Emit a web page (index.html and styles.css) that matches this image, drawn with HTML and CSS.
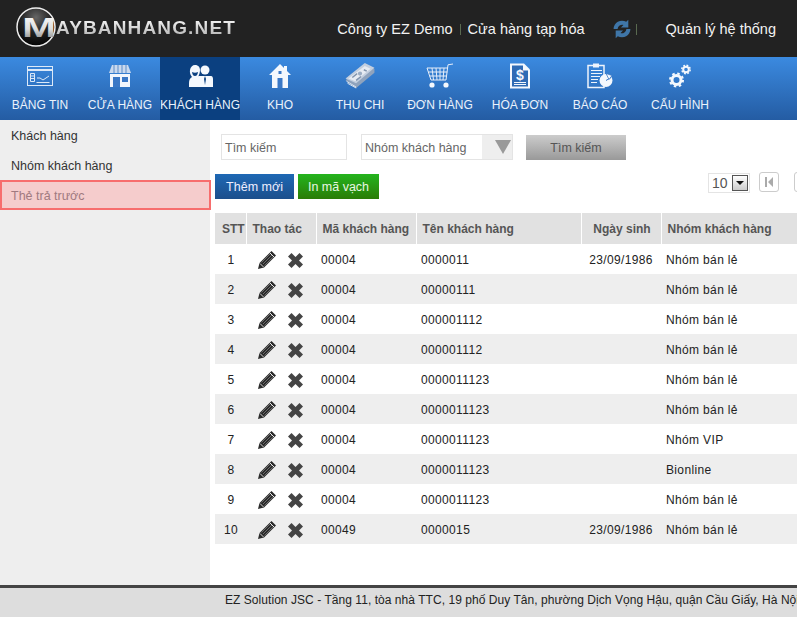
FILE: index.html
```html
<!DOCTYPE html>
<html lang="vi">
<head>
  <meta charset="UTF-8">
  <meta name="viewport" content="width=device-width, initial-scale=1.0">
  <title>Khách hàng</title>
  <link rel="stylesheet" href="styles.css">
</head>
<body>
  <header class="topbar">
    <div class="logo">
      <svg class="logo-badge" width="40" height="40" viewBox="0 0 40 40">
        <defs>
          <radialGradient id="ball" cx="50%" cy="25%" r="80%">
            <stop offset="0" stop-color="#666"/>
            <stop offset="0.5" stop-color="#222"/>
            <stop offset="1" stop-color="#000"/>
          </radialGradient>
          <linearGradient id="metal" x1="0" y1="0" x2="0" y2="1">
            <stop offset="0" stop-color="#fff"/>
            <stop offset="0.55" stop-color="#ddd"/>
            <stop offset="1" stop-color="#777"/>
          </linearGradient>
        </defs>
        <circle cx="20" cy="20" r="19" fill="url(#ball)" stroke="#eee" stroke-width="1.500"/>
        <text transform="translate(23 30) scale(1.500 1)" text-anchor="middle" class="logo-m" fill="url(#metal)">M</text>
      </svg>
      <span class="logo-text">AYBANHANG.NET</span>
    </div>
    <div class="top-links">
      <span>Công ty EZ Demo</span>
      <i class="sep"></i>
      <span>Cửa hàng tạp hóa</span>
      <svg class="sync" width="18" height="20" viewBox="1 0 16 19">
        <path d="M1 9.500a8 8 0 0 1 12-6.800L15 .8V8H8l2.400-2.400A4.500 4.500 0 0 0 4.800 9.500z" fill="#3f76a8"/>
        <path d="M17 9.500a8 8 0 0 1-12 6.800L3 18.200V11h7l-2.400 2.400A4.500 4.500 0 0 0 13.200 9.500z" fill="#3f76a8"/>
      </svg>
      <i class="sep sep-sync"></i>
      <span class="system">Quản lý hệ thống</span>
    </div>
  </header>

  <nav class="mainnav">
    <a class="nav-item">
      <svg width="28" height="22" viewBox="0 0 28 22" fill="none" stroke="#dce9f8" stroke-width="1">
        <rect x="1.500" y="1.500" width="25" height="19"/>
        <path d="M2 5h24" stroke-width="2"/>
        <path d="M4.500 8.500h4v8h-4zM4.500 11h4M4.500 13.500h4M10.500 17.500h13M11 13h3l3 2 6-4"/>
      </svg>
      <span>BẢNG TIN</span>
    </a>
    <a class="nav-item">
      <svg width="24" height="24" viewBox="0 0 24 24">
        <path d="M4 1h16l3 8H1z" fill="#c9d9ee"/>
        <path d="M6 1v8M10 1v8M14 1v8M18 1v8" stroke="#5d8dc9" stroke-width="1"/>
        <path d="M2 10h20v13H2z" fill="#f2f6fc"/>
        <path d="M5 13h7v10H5z" fill="#3a78c6"/>
        <path d="M14 13h6v5h-6z" fill="#3a78c6"/>
      </svg>
      <span>CỬA HÀNG</span>
    </a>
    <a class="nav-item active">
      <svg width="26" height="24" viewBox="0 0 26 24" fill="#f4f8fd">
        <path d="M8 1c3.500 0 5 2.500 5 5 0 3-1 5-1.500 6l2 1.500V23H2v-4c0-3 1-5 3-6-1.500-2-2.500-4-2-7 .4-3 2.500-5 5-5z"/>
        <circle cx="18" cy="6" r="4.500"/>
        <path d="M12 12h12c1.500 0 2 1.500 2 3v8H12z"/>
        <path d="M18 12l-1 3 1 6 1-6z" fill="#0b4080"/>
        <path d="M5 8c2 1 4 1 6 0-.5 3-1.500 4-3 4S5.500 11 5 8z" fill="#0b4080"/>
      </svg>
      <span>KHÁCH HÀNG</span>
    </a>
    <a class="nav-item">
      <svg width="22" height="24" viewBox="0 0 22 24">
        <path d="M11 0L0 11h3v13h16V11h3l-4-4V2h-3v2z" fill="#f4f8fd"/>
        <path d="M8.500 14h5v10h-5z" fill="#3a78c6"/>
        <path d="M9.500 7h3v3h-3z" fill="#3a78c6"/>
      </svg>
      <span>KHO</span>
    </a>
    <a class="nav-item">
      <svg width="30" height="27" viewBox="0 0 30 27">
        <path d="M0 18L20 1l10 5v4L11 26z" fill="#8fa3bd"/>
        <path d="M0 16L20 0l10 5-19 16z" fill="#c3cfdf"/>
        <path d="M3 16L20 3l6 3-16 13z" fill="#e6ebf2"/>
        <path d="M7 15l5-4M11 18l5-4M19 7l3 1.500" stroke="#8194ad" stroke-width="1.500"/>
        <circle cx="15" cy="11" r="2.200" fill="#9badc4"/>
        <path d="M1 19l10 6M2 21l9 5" stroke="#dfe6ef" stroke-width="1"/>
      </svg>
      <span>THU CHI</span>
    </a>
    <a class="nav-item">
      <svg width="28" height="26" viewBox="0 0 28 26" fill="none" stroke="#e6eefa" stroke-width="1">
        <path d="M27 1l-5 .8L20 17H5L1 5h21"/>
        <path d="M2.300 9h19M3.600 13h17M6 5l1.500 12M10 5l1 12M14 5v12M18 5l-1 12"/>
        <circle cx="6" cy="22" r="2.600" fill="#f4f8fd" stroke="none"/>
        <circle cx="20" cy="22" r="2.600" fill="#f4f8fd" stroke="none"/>
      </svg>
      <span>ĐƠN HÀNG</span>
    </a>
    <a class="nav-item">
      <svg width="22" height="25" viewBox="0 0 22 25">
        <path d="M1 0h14l6 6v19H1z" fill="#f4f8fd"/>
        <path d="M3 2h11v5h5v16H3z" fill="#2f6bb5"/>
        <text x="11" y="16" text-anchor="middle" class="bill-sign">$</text>
        <path d="M5 19h12M5 21h12" stroke="#f4f8fd" stroke-width="1"/>
      </svg>
      <span>HÓA ĐƠN</span>
    </a>
    <a class="nav-item">
      <svg width="27" height="25" viewBox="0 0 27 25">
        <path d="M1 2h16v22H1z" fill="none" stroke="#eef4fc" stroke-width="1.500"/>
        <path d="M6 0h6v4H6z" fill="#eef4fc"/>
        <path d="M4 7h11M4 10h11M4 13h9M4 16h7M4 19h6" stroke="#eef4fc" stroke-width="1"/>
        <circle cx="19" cy="17" r="6.500" fill="#f4f8fd"/>
        <path d="M19 17l5-3" stroke="#3a78c6" stroke-width="1"/>
        <path d="M19 10l6 2-3 4z" fill="#f4f8fd" stroke="#3a78c6" stroke-width=".8"/>
      </svg>
      <span>BÁO CÁO</span>
    </a>
    <a class="nav-item">
      <svg width="22" height="24" viewBox="0 0 22 24" fill="none" stroke="#f4f8fd">
        <circle cx="7.500" cy="16" r="4.500" stroke-width="3"/>
        <circle cx="7.500" cy="16" r="6.500" stroke-width="2" stroke-dasharray="2.500 2.600"/>
        <circle cx="17" cy="5.500" r="2.800" stroke-width="2"/>
        <circle cx="17" cy="5.500" r="4.200" stroke-width="1.500" stroke-dasharray="1.800 1.500"/>
      </svg>
      <span>CẤU HÌNH</span>
    </a>
  </nav>

  <div class="page">
    <aside class="sidebar">
      <a class="side-item">Khách hàng</a>
      <a class="side-item">Nhóm khách hàng</a>
      <a class="side-item current">Thẻ trả trước</a>
    </aside>

    <main class="content">
      <div class="search-row">
        <div class="field search-input">Tìm kiếm</div>
        <div class="field search-select">
          <span>Nhóm khách hàng</span>
          <b class="select-arrow"></b>
        </div>
        <button class="btn-search">Tìm kiếm</button>
      </div>

      <div class="action-row">
        <button class="btn btn-blue">Thêm mới</button>
        <button class="btn btn-green">In mã vạch</button>
        <div class="pager">
          <div class="page-size">
            <span>10</span>
            <b class="size-arrow"></b>
          </div>
          <a class="page-btn">
            <svg width="10" height="10" viewBox="0 0 10 10" fill="#aaa"><path d="M1 0h2v10H1zM9 0v10L4 5z"/></svg>
          </a>
          <a class="page-btn"></a>
        </div>
      </div>

      <table class="grid">
        <thead>
          <tr>
            <th class="c-stt">STT</th>
            <th class="c-act">Thao tác</th>
            <th class="c-code">Mã khách hàng</th>
            <th class="c-name">Tên khách hàng</th>
            <th class="c-date">Ngày sinh</th>
            <th class="c-group">Nhóm khách hàng</th>
          </tr>
        </thead>
        <tbody id="rows"></tbody>
      </table>
    </main>
  </div>

  <footer class="footer">EZ Solution JSC - Tầng 11, tòa nhà TTC, 19 phố Duy Tân, phường Dịch Vọng Hậu, quận Cầu Giấy, Hà Nội</footer>

  <script>
    const customers = [
      ["00004", "0000011", "23/09/1986", "Nhóm bán lẻ"],
      ["00004", "00000111", "", "Nhóm bán lẻ"],
      ["00004", "000001112", "", "Nhóm bán lẻ"],
      ["00004", "000001112", "", "Nhóm bán lẻ"],
      ["00004", "0000011123", "", "Nhóm bán lẻ"],
      ["00004", "0000011123", "", "Nhóm bán lẻ"],
      ["00004", "0000011123", "", "Nhóm VIP"],
      ["00004", "0000011123", "", "Bionline"],
      ["00004", "0000011123", "", "Nhóm bán lẻ"],
      ["00049", "0000015", "23/09/1986", "Nhóm bán lẻ"]
    ];

    const pencil = `<svg class="ico-edit" width="18" height="18" viewBox="0 0 18 18">
      <path d="M13.500 0l4.500 4.500L6 16.500 0 18l1.500-6z" fill="#2a2a2a"/>
      <path d="M3.500 11.500l9-9M5 13l9-9M6.500 14.500l9-9" stroke="#8a8a8a" stroke-width=".7"/>
      <path d="M11.800 1.800l4.400 4.400" stroke="#fff" stroke-width=".9"/>
      <path d="M2 12.500l3.500 3.500" stroke="#fff" stroke-width=".8"/>
    </svg>`;
    const cross = `<svg class="ico-del" width="15" height="15" viewBox="0 0 15 15">
      <path d="M3.500 0L7.500 4 11.500 0 15 3.500 11 7.500l4 4L11.500 15l-4-4-4 4L0 11.500l4-4-4-4z" fill="#444"/>
    </svg>`;

    const tbody = document.getElementById("rows");
    customers.forEach((c, i) => {
      const tr = document.createElement("tr");
      tr.innerHTML = `<td class="c-stt">${i + 1}</td>
        <td class="c-act">${pencil}${cross}</td>
        <td>${c[0]}</td><td>${c[1]}</td><td class="c-date">${c[2]}</td><td>${c[3]}</td>`;
      tbody.appendChild(tr);
    });
  </script>
</body>
</html>
```

FILE: styles.css
```css
* {
  box-sizing: border-box;
}
html, body {
  height: 100%;
}
body {
  margin: 0;
  display: flex;
  flex-direction: column;
  overflow: hidden;
  font-family: "Liberation Sans", Arial, sans-serif;
  font-size: 12px;
  color: #222;
  background: #fff;
}

/* top bar */
.topbar {
  height: 57px;
  flex: none;
  background: #222;
  display: flex;
  align-items: center;
  justify-content: space-between;
  color: #f2f2f2;
}
.logo {
  display: flex;
  align-items: center;
  margin-left: 16px;
  margin-top: -3px;
}
.logo-m {
  font-family: "Liberation Sans", Arial, sans-serif;
  font-size: 27px;
  font-weight: bold;
}
.logo-text {
  font-size: 19px;
  font-weight: bold;
  letter-spacing: 1.150px;
  margin-top: 2px;
  color: #ddd;
  background: linear-gradient(#fff, #aaa);
  -webkit-background-clip: text;
  background-clip: text;
  -webkit-text-fill-color: transparent;
}
.top-links {
  display: flex;
  align-items: center;
  font-size: 14.500px;
  margin-right: 21px;
  margin-top: 1px;
}
.sep {
  width: 1px;
  height: 11px;
  background: #5a6a50;
  margin: 0 7px;
}
.sync {
  margin-left: 28px;
}
.sep-sync {
  margin: 0 0 0 5px;
}
.system {
  margin-left: 29px;
}

/* main nav */
.mainnav {
  height: 63px;
  flex: none;
  display: flex;
  background: linear-gradient(#3b8ae0, #245ca3);
}
.nav-item {
  width: 80px;
  display: flex;
  flex-direction: column;
  align-items: center;
  color: #eaf2fb;
  font-size: 12px;
  white-space: nowrap;
}
.nav-item svg {
  height: 26px;
  margin-top: 6px;
}
.nav-item span {
  margin-top: 9px;
}
.nav-item.active {
  background: #0b4080;
}
.bill-sign {
  font-family: "Liberation Sans", Arial, sans-serif;
  font-size: 14px;
  font-weight: bold;
  fill: #f4f8fd;
}

/* body area */
.page {
  flex: 1;
  display: flex;
  min-height: 0;
}
.sidebar {
  width: 210px;
  flex: none;
  background: #eee;
}
.side-item {
  display: block;
  height: 30px;
  line-height: 32px;
  padding-left: 11px;
  font-size: 12.500px;
  color: #333;
}
.side-item.current {
  width: 211px;
  line-height: 28px;
  padding-left: 9px;
  border: 2px solid #f76d6d;
  background: #f5cccc;
  color: #a07a80;
}
.content {
  flex: 1;
  min-width: 0;
  padding: 14px 0 0 5px;
}

/* search row */
.search-row {
  display: flex;
  align-items: center;
  padding-left: 6px;
  height: 26px;
}
.field {
  height: 26px;
  border: 1px solid #e4e4e4;
  background: #fff;
  line-height: 26px;
  font-size: 12.500px;
  color: #666;
  padding-left: 3px;
}
.search-input {
  width: 126px;
}
.search-select {
  width: 152px;
  margin-left: 14px;
  display: flex;
  justify-content: space-between;
  background: linear-gradient(to right, #fff 120px, #eee 120px);
}
.select-arrow {
  width: 0;
  height: 0;
  margin: 5px 1px 0 0;
  border-left: 8px solid transparent;
  border-right: 8px solid transparent;
  border-top: 14px solid #999;
}
.btn-search {
  width: 100px;
  height: 25px;
  margin-left: 13px;
  margin-top: 1px;
  border: none;
  background: linear-gradient(#ccc, #999);
  font: 12.500px "Liberation Sans", Arial, sans-serif;
  color: #555;
}

/* buttons and pager */
.action-row {
  display: flex;
  align-items: flex-start;
  margin-top: 14px;
  height: 39px;
}
.btn {
  flex: none;
  height: 25px;
  padding: 0;
  border: none;
  color: #eef;
  font: 12.500px "Liberation Sans", Arial, sans-serif;
}
.btn-blue {
  width: 79px;
  background: linear-gradient(#1e68b4, #1c4f8c);
}
.btn-green {
  width: 81px;
  margin-left: 4px;
  background: linear-gradient(#24b41e, #2a7c06);
  color: #e8f8e0;
}
.pager {
  display: flex;
  margin-left: 329px;
  flex: none;
}
.page-size {
  width: 42px;
  height: 20px;
  border: 1px solid #e4e4e4;
  display: flex;
  align-items: center;
  justify-content: space-between;
  padding: 0 1px 0 3px;
  font-size: 14px;
  color: #555;
  margin-top: -1px;
}
.size-arrow {
  width: 16px;
  height: 16px;
  border: 1px solid #555;
  background: linear-gradient(#fff, #ccc);
  position: relative;
}
.size-arrow::after {
  content: "";
  position: absolute;
  left: 3px;
  top: 5px;
  border-left: 4px solid transparent;
  border-right: 4px solid transparent;
  border-top: 4px solid #111;
}
.page-btn {
  flex: none;
  width: 20px;
  height: 20px;
  margin-left: 9px;
  border: 1px solid #ccc;
  border-radius: 3px;
  display: flex;
  align-items: center;
  justify-content: center;
  margin-top: -2px;
}
.page-btn + .page-btn {
  margin-left: 15px;
}

/* table */
.grid {
  width: 600px;
  table-layout: fixed;
  border-collapse: collapse;
}
.grid th {
  height: 31px;
  background: #e1e1e1;
  border-right: 1px solid #fff;
  border-bottom: 1px solid #fff;
  text-align: left;
  padding: 1px 0 0 6px;
  font-size: 12px;
  color: #555;
}
.grid td {
  height: 30px;
  padding: 1px 0 0 5px;
  font-size: 12px;
  letter-spacing: 0.350px;
  color: #222;
}
.grid tbody tr:nth-child(even) {
  background: #eee;
}
.grid .c-stt {
  width: 31px;
  padding: 1px 0 0 1px;
  text-align: center;
}
.grid th.c-stt {
  padding-left: 7px;
  text-align: left;
}
.grid .c-act {
  width: 70px;
}
.grid td.c-act {
  padding-left: 12px;
  letter-spacing: 0;
}
.grid .c-code {
  width: 100px;
}
.grid .c-name {
  width: 165px;
}
.grid .c-date {
  width: 80px;
  padding: 1px 0 0;
  text-align: center;
}
.grid th.c-date {
  padding-left: 2px;
}
.ico-edit,
.ico-del {
  vertical-align: middle;
}
.ico-del {
  margin-left: 12px;
  margin-top: 1px;
}

/* footer */
.footer {
  height: 32px;
  flex: none;
  border-top: 3px solid #444;
  background: #ddd;
  padding-left: 225px;
  line-height: 24px;
  font-size: 12px;
  letter-spacing: 0.050px;
  white-space: nowrap;
  color: #222;
}
```
